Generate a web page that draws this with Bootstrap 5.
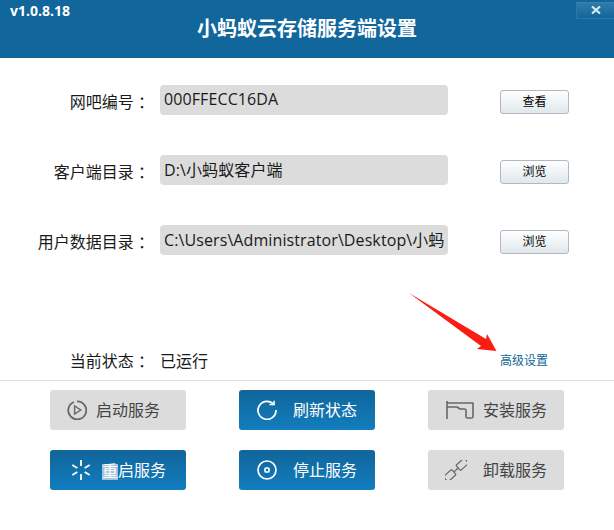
<!DOCTYPE html>
<html lang="zh-CN">
<head>
<meta charset="utf-8">
<title>小蚂蚁云存储服务端设置</title>
<link href="https://cdn.jsdelivr.net/npm/bootstrap@5.3.0/dist/css/bootstrap.min.css" rel="stylesheet">
<style>
html,body{height:100%;margin:0}
body{width:614px;height:530px;overflow:hidden;background:#fff;color:#1a1a1a;font-family:"Open Sans","Noto Sans CJK SC",sans-serif;font-size:16px;line-height:1.5;position:relative}
.app-head{height:58px;background:#11669b;color:#fff}
.app-ver{left:10px;top:1px;font-size:14px;font-weight:700;line-height:20px}
.app-title{font-size:20px;font-weight:700;line-height:58px;padding-right:0}
.app-close{right:0;top:2px;width:38px;height:17px;border:1px solid #2c78a8;border-right:0;border-top-color:#3a82ad;background:linear-gradient(#2f7cab,#11669b);border-radius:0}
.app-close svg{display:block;margin:2px auto 0}
.set-row{height:30px;margin-top:40px}
.set-row.first{margin-top:27px}
.set-label{width:160px;padding-right:6px;text-align:right;white-space:nowrap}
.set-row .set-label{padding-top:3px}
.set-input.form-control{width:288px;height:30px;padding:0 3px 3px 4px;border:0;border-radius:4px;background:#dcdcdc;color:#1a1a1a;font-size:16px;letter-spacing:.1px;box-shadow:none}
.set-btn.btn{width:69px;height:24px;margin:4px 0 0 52px;padding:0;border:1px solid #b3b7c3;border-radius:3px;background:linear-gradient(#fff,#dfe8ec);color:#000;font-size:12px;line-height:22px}
.stat-row{height:24px;margin-top:94px}
.stat-val{width:340px}
.adv-link{font-size:12px;color:#11669b;text-decoration:none;line-height:24px}
.sep{height:1px;margin-top:7px;background:#dedede}
.svc-grid{display:grid;grid-template-columns:repeat(3,136px);column-gap:53px;row-gap:20px;padding:9px 0 0 50px}
.svc.btn{height:40px;padding:0;border:0;border-radius:3px;font-size:16px;line-height:40px;text-align:left}
.svc-off.btn{background:#dcdcdc;color:#444}
.svc-on.btn{background:linear-gradient(#11659a,#127dbe);color:#fff}
.svc svg{flex:none}
.ic-play{margin-left:17px;margin-right:9px}
.ic-spin{margin-left:21px;margin-right:11px}
.ic-ref{margin-left:18px;margin-right:16px}
.ic-stop{margin-left:18px;margin-right:16px}
.ic-inst{margin-left:18px;margin-right:9px}
.ic-unin{margin-left:17px;margin-right:16px}
.hl{display:inline-block;height:16px;line-height:15px;background:#a6c3dc;vertical-align:middle}
.red-arrow{left:405px;top:288px}
</style>
</head>
<body>
<header class="app-head position-relative text-center">
  <div class="app-ver position-absolute">v1.0.8.18</div>
  <div class="app-title">小蚂蚁云存储服务端设置</div>
  <div class="app-close position-absolute"><svg width="12" height="10" viewBox="0 0 12 10"><path d="M2 1.500 10 8.500M10 1.500 2 8.500" stroke="#dfe9f0" stroke-width="2.200" fill="none"/></svg></div>
</header>
<main>
  <div class="set-row first d-flex align-items-center">
    <div class="set-label">网吧编号 ：</div>
    <input class="set-input form-control" readonly value="000FFECC16DA">
    <button class="set-btn btn" type="button">查看</button>
  </div>
  <div class="set-row d-flex align-items-center">
    <div class="set-label">客户端目录 ：</div>
    <input class="set-input form-control" readonly value="D:\小蚂蚁客户端">
    <button class="set-btn btn" type="button">浏览</button>
  </div>
  <div class="set-row d-flex align-items-center">
    <div class="set-label">用户数据目录 ：</div>
    <input class="set-input form-control" readonly value="C:\Users\Administrator\Desktop\小蚂蚁客户端数据">
    <button class="set-btn btn" type="button">浏览</button>
  </div>
  <div class="stat-row d-flex align-items-center">
    <div class="set-label">当前状态 ：</div>
    <div class="stat-val">已运行</div>
    <a class="adv-link" href="#">高级设置</a>
  </div>
  <div class="sep"></div>
  <div class="svc-grid">
    <button class="svc svc-off btn d-flex align-items-center" type="button">
      <svg class="ic-play" width="20" height="20" viewBox="0 0 20 20" fill="none" stroke="#666" stroke-width="1.800"><path d="M7 2a9 9 0 1 0 3-.6"/><path d="M7.600 6v8l6.200-4z" stroke-width="1.400"/></svg>启动服务</button>
    <button class="svc svc-on btn d-flex align-items-center" type="button">
      <svg class="ic-ref" width="20" height="20" viewBox="0 0 20 20" fill="none" stroke="#fff" stroke-width="1.700"><path d="M16.600 4.200A9 9 0 1 0 19 10"/><path d="M12.500 4.600h4.600V.8" stroke-width="1.500"/></svg>刷新状态</button>
    <button class="svc svc-off btn d-flex align-items-center" type="button">
      <svg class="ic-inst" width="28" height="18" viewBox="0 0 28 18" fill="none" stroke="#666" stroke-width="1.600"><path d="M1 0V18"/><path d="M1 2H27V16Q27 17 25 17H22Q20 17 20 16V9Q20 8 18 8H14L11 6H1" stroke-linejoin="round"/></svg>安装服务</button>
    <button class="svc svc-on btn d-flex align-items-center" type="button">
      <svg class="ic-spin" width="20" height="20" viewBox="0 0 20 20" fill="none" stroke="#fff" stroke-width="1.800"><path d="M10 0v6M10 14v6M1.300 5l5 3M13.700 12l5 3M1.300 15l5-3M13.700 8l5-3"/></svg><span><span class="hl">重</span>启服务</span></button>
    <button class="svc svc-on btn d-flex align-items-center" type="button">
      <svg class="ic-stop" width="20" height="20" viewBox="0 0 20 20" fill="none" stroke="#fff" stroke-width="1.700"><circle cx="10" cy="10" r="9"/><rect x="8" y="8" width="4" height="4" rx="1"/></svg>停止服务</button>
    <button class="svc svc-off btn d-flex align-items-center" type="button">
      <svg class="ic-unin" width="22" height="20" viewBox="-11 -10 22 20" fill="none" stroke="#666" stroke-width="1.200"><g transform="rotate(-42)"><rect x="-14" y="-3.500" width="11" height="7" rx="1"/><rect x="3" y="-3.500" width="11" height="7" rx="1"/><path d="M-3 0H3"/></g></svg>卸载服务</button>
  </div>
</main>
<svg class="red-arrow position-absolute" width="96" height="68" viewBox="405 288 96 68"><path d="M409 293 486 339 487 334 496.500 351 477 349 481 346Z" fill="#fb1c14"/></svg>
</body>
</html>
